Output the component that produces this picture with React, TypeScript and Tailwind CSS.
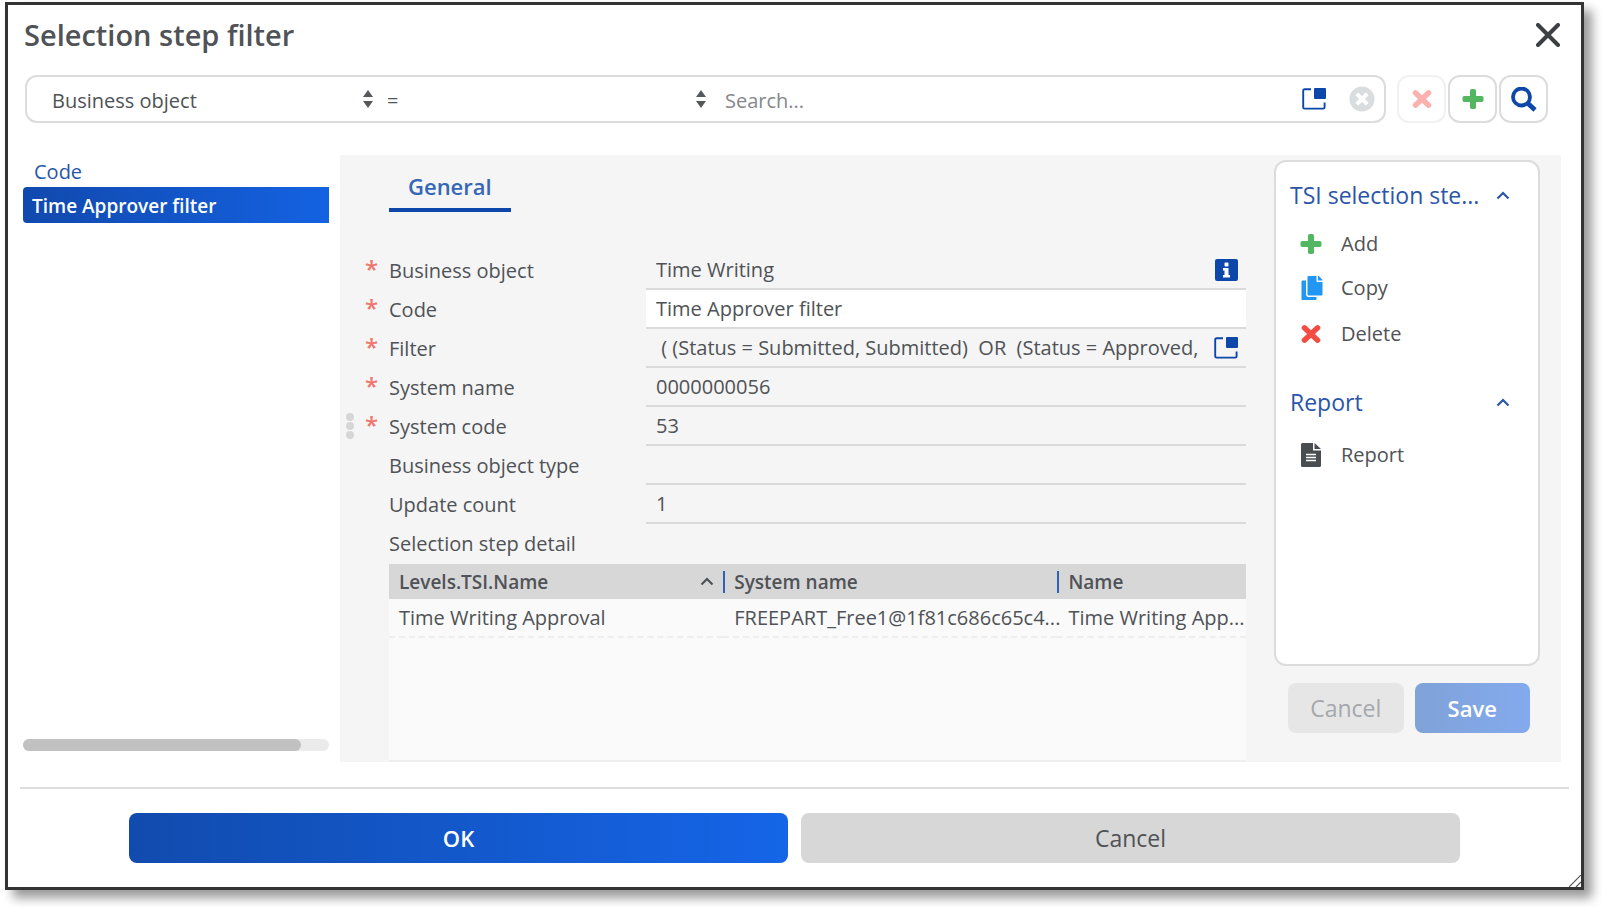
import { useState } from 'react'
import { FaCopy, FaTimesCircle } from 'react-icons/fa'

const fields = [
  { id: 'business-object', label: 'Business object', value: 'Time Writing', required: true, icon: 'info' },
  { id: 'code', label: 'Code', value: 'Time Approver filter', required: true, editable: true },
  {
    id: 'filter',
    label: 'Filter',
    value: ' ( (Status = Submitted, Submitted)  OR  (Status = Approved,',
    required: true,
    icon: 'open',
  },
  { id: 'system-name', label: 'System name', value: '0000000056', required: true },
  { id: 'system-code', label: 'System code', value: '53', required: true },
  { id: 'object-type', label: 'Business object type', value: '' },
  { id: 'update-count', label: 'Update count', value: '1' },
]

const OpenIcon = () => (
  <svg width="24" height="22" viewBox="0 0 24 22" fill="none">
    <path d="M9 1.2H2.6Q1.2 1.2 1.2 2.6V19.2Q1.2 20.6 2.6 20.6H21.2Q22.6 20.6 22.6 19.2V14.5" stroke="#0d47a9" strokeWidth="1.9" />
    <rect x="12" y="0" width="12" height="11" rx="1" fill="#0d47a9" />
  </svg>
)

const InfoIcon = () => (
  <svg width="23" height="22" viewBox="0 0 23 22">
    <rect width="23" height="22" rx="2" fill="#0d47a9" />
    <rect x="9.5" y="3.5" width="4" height="4" rx="1" fill="#fff" />
    <path d="M8 9h5.5v7H15v2.5H8V16h1.5v-4.500H8z" fill="#fff" />
  </svg>
)

const PlusIcon = () => (
  <svg width="22" height="22" viewBox="0 0 22 22">
    <rect x="0.5" y="8" width="21" height="6" rx="1.800" fill="#53b761" />
    <rect x="8" y="1" width="6" height="20" rx="1.800" fill="#53b761" />
  </svg>
)

const CrossIcon = ({ color }: { color: string }) => (
  <svg width="22" height="22" viewBox="0 0 22 22" stroke={color} strokeWidth="5.400" strokeLinecap="round">
    <path d="M4.400 4.800l13.200 12.400M17.600 4.800L4.400 17.200" />
  </svg>
)

const SearchIcon = () => (
  <svg width="26" height="25" viewBox="0 0 26 25" fill="none" stroke="#0d47a9">
    <circle cx="10.500" cy="10" r="8.500" strokeWidth="3.800" />
    <path d="M16.500 16l7.500 7" strokeWidth="4.800" />
  </svg>
)

const ReportIcon = () => (
  <svg width="20" height="24" viewBox="0 0 20 24">
    <path d="M1.500 0H12v7.500h8V22.500Q20 24 18.500 24h-17Q0 24 0 22.500v-21Q0 0 1.500 0z" fill="#4a4d50" />
    <path d="M13.500 0l6.500 6h-6.500z" fill="#4a4d50" />
    <path d="M5 11.500h10M5 14.500h10M5 17.500h10" stroke="#fff" strokeWidth="1.500" />
  </svg>
)

const SortArrows = () => (
  <svg width="12" height="18" viewBox="0 0 12 18" className="pointer-events-none shrink-0">
    <path d="M6 0l5 7H1zM6 18l5-7H1z" fill="#55585c" />
  </svg>
)

const CaretUp = () => (
  <svg width="14" height="9" viewBox="0 0 14 9" fill="none">
    <path d="M1.500 7.500L7 2l5.500 5.500" stroke="currentColor" strokeWidth="2.200" />
  </svg>
)

function SearchBar() {
  const [query, setQuery] = useState('')

  return (
    <div className="flex pl-[17px] pr-[33px]">
      <div className="flex h-12 min-w-0 flex-1 items-center rounded-xl border-2 border-[#dcdcdc] pl-[25px] pr-[9px]">
        <div className="flex w-[322px] items-center">
          <select aria-label="Search field" className="min-w-0 flex-1 appearance-none pt-[3px] outline-none">
            <option>Business object</option>
          </select>
          <SortArrows />
        </div>
        <div className="ml-[13px] flex w-[320px] items-center">
          <select aria-label="Operator" className="min-w-0 flex-1 appearance-none pt-[3px] outline-none">
            <option>=</option>
          </select>
          <SortArrows />
        </div>
        <input
          aria-label="Search"
          placeholder="Search..."
          value={query}
          onChange={(e) => setQuery(e.target.value)}
          className="ml-[18px] min-w-0 flex-1 pt-[3px] outline-none placeholder:text-[#85888c]"
        />
        <button aria-label="Open lookup" className="mr-[23px]">
          <OpenIcon />
        </button>
        <button aria-label="Clear" onClick={() => setQuery('')} className="text-[#d9dde0]">
          <FaTimesCircle size={26} />
        </button>
      </div>
      <div className="ml-[11px] flex gap-[2px]">
        <button aria-label="Remove condition" disabled className="flex h-12 w-[49px] items-center justify-center rounded-xl border-2 border-[#f1f1f1]">
          <CrossIcon color="#fbb1ad" />
        </button>
        <button aria-label="Add condition" className="flex h-12 w-[49px] items-center justify-center rounded-xl border-2 border-[#dcdcdc]">
          <PlusIcon />
        </button>
        <button aria-label="Run search" className="flex h-12 w-[49px] items-center justify-center rounded-xl border-2 border-[#dcdcdc]">
          <SearchIcon />
        </button>
      </div>
    </div>
  )
}

function ResultList() {
  return (
    <div className="flex w-[306px] shrink-0 flex-col pb-[11px]">
      <div className="flex h-8 items-center pl-[11px] pt-[2px] text-[#2b55a8]">Code</div>
      <button className="h-9 rounded-l-sm bg-linear-to-r from-[#1149ae] to-[#1462e2] pl-[9px] pt-px text-left text-[19px] font-semibold text-white">
        Time Approver filter
      </button>
      <div className="mt-auto h-3 rounded-full bg-[#ebebeb]">
        <div className="h-3 w-[91%] rounded-full bg-[#c1c1c1]" />
      </div>
    </div>
  )
}

function DetailTable() {
  return (
    <div className="flex-1 border-b-2 border-[#eeeeee] bg-[#fafafa]">
      <table className="w-full table-fixed text-left">
        <thead className="bg-[#d7d7d7] text-[19px]">
          <tr className="h-[35px]">
            <th className="w-[39%] p-0 font-semibold">
              <div className="flex items-center justify-between pl-[10px] pr-[9px]">
                Levels.TSI.Name
                <CaretUp />
              </div>
            </th>
            <th className="w-[39%] p-0 font-semibold">
              <div className="flex items-center gap-[9px]">
                <span className="h-[22px] w-[2px] bg-[#2f62b5]" />
                System name
              </div>
            </th>
            <th className="p-0 font-semibold">
              <div className="flex items-center gap-[9px]">
                <span className="h-[22px] w-[2px] bg-[#2f62b5]" />
                Name
              </div>
            </th>
          </tr>
        </thead>
        <tbody>
          <tr className="h-[38px] whitespace-nowrap border-b-2 border-dashed border-[#eeeeee]">
            <td className="pl-[10px]">Time Writing Approval</td>
            <td className="pl-[11px]">FREEPART_Free1@1f81c686c65c4...</td>
            <td className="pl-[11px]">Time Writing App...</td>
          </tr>
        </tbody>
      </table>
    </div>
  )
}

function DetailForm() {
  return (
    <div className="flex min-w-0 flex-1">
      <div className="flex w-[49px] shrink-0 flex-col pl-[6px] pt-[258px]">
        <div className="flex flex-col gap-px">
          <span className="h-2 w-2 rounded-full bg-[#d6d6d6]" />
          <span className="h-2 w-2 rounded-full bg-[#d6d6d6]" />
          <span className="h-2 w-2 rounded-full bg-[#d6d6d6]" />
        </div>
      </div>
      <div className="flex min-w-0 flex-1 flex-col">
        <div role="tablist" className="mb-[39px] flex">
          <button role="tab" aria-selected className="h-[57px] border-b-4 border-[#0d47a9] px-[19px] pt-2 text-[22px] font-semibold text-[#3566b8]">
            General
          </button>
        </div>
        {fields.map((f) => (
          <div key={f.id} className="flex h-[39px] items-center">
            <label htmlFor={f.id} className="relative w-[257px] shrink-0">
              {f.required && <span className="absolute -left-6 -top-[2px] text-[24px] font-semibold text-[#f0756f]">*</span>}
              {f.label}
            </label>
            <div className={`flex h-[39px] min-w-0 flex-1 items-center border-b-2 border-[#dadada] pl-[10px] pr-2 ${f.editable ? 'bg-white' : ''}`}>
              <input id={f.id} defaultValue={f.value} readOnly={!f.editable} className="min-w-0 flex-1 whitespace-pre outline-none" />
              {f.icon === 'info' && <button aria-label="Show business object"><InfoIcon /></button>}
              {f.icon === 'open' && <button aria-label="Edit filter"><OpenIcon /></button>}
            </div>
          </div>
        ))}
        <div className="flex h-10 items-center">Selection step detail</div>
        <DetailTable />
      </div>
    </div>
  )
}

function ActionPanel() {
  return (
    <div className="ml-7 mr-[21px] flex w-[266px] shrink-0 flex-col pb-[29px] pt-[5px]">
      <div className="flex-1 rounded-xl border-2 border-[#dcdcdc] bg-white pl-[14px]">
        <button className="flex h-[66px] w-[220px] items-center justify-between text-[23px] text-[#2b55a8]">
          <span>TSI selection ste...</span>
          <CaretUp />
        </button>
        <button className="flex h-8 items-center pl-[10px]">
          <span className="flex w-[41px]"><PlusIcon /></span>
          <span>Add</span>
        </button>
        <button className="mt-3 flex h-8 items-center pl-[10px]">
          <span className="flex w-[41px]"><FaCopy size={24} color="#2196f3" /></span>
          <span>Copy</span>
        </button>
        <button className="mt-[14px] flex h-8 items-center pl-[10px]">
          <span className="flex w-[41px]"><CrossIcon color="#f44c43" /></span>
          <span>Delete</span>
        </button>
        <button className="mt-[34px] flex h-9 w-[220px] items-center justify-between text-[23px] text-[#2b55a8]">
          <span>Report</span>
          <CaretUp />
        </button>
        <button className="mt-[19px] flex h-8 items-center pl-[11px]">
          <span className="flex w-10"><ReportIcon /></span>
          <span>Report</span>
        </button>
      </div>
      <div className="mt-[17px] flex gap-[11px] pl-[14px] pr-[10px]">
        <button disabled className="h-[50px] flex-1 rounded-lg bg-[#e6e6e6] text-[23px] text-[#a5a8ab]">Cancel</button>
        <button disabled className="h-[50px] flex-1 rounded-lg bg-linear-to-r from-[#80a2d8] to-[#83aaee] text-[22px] font-semibold text-white">Save</button>
      </div>
    </div>
  )
}

export default function App() {
  return (
    <div className="bg-white pb-[17px] pl-[5px] pr-[18px] pt-[2px] font-['Open_Sans','Noto_Sans',sans-serif] text-[20px] leading-7 text-[#4f5256]">
      <div role="dialog" aria-labelledby="dialog-title" className="relative border-3 border-[#333333] bg-white shadow-[8px_8px_10px_rgba(0,0,0,0.4)]">
        <div className="flex h-[70px] items-center justify-between pb-[10px] pl-4 pr-[21px]">
          <h1 id="dialog-title" className="text-[29px] font-semibold">Selection step filter</h1>
          <button aria-label="Close">
            <svg width="24" height="24" viewBox="0 0 24 24" fill="none">
              <path d="M2 2l20 20M22 2L2 22" stroke="#3c3f43" strokeWidth="4" strokeLinecap="round" />
            </svg>
          </button>
        </div>
        <SearchBar />
        <div className="mt-8 flex min-h-[607px] gap-[11px] pl-[15px] pr-5">
          <ResultList />
          <div className="flex min-w-0 flex-1 bg-[#f5f5f5]">
            <DetailForm />
            <ActionPanel />
          </div>
        </div>
        <div className="mx-3 mt-[25px] border-t-2 border-[#dedede]" />
        <div className="flex gap-[13px] px-[121px] py-6">
          <button className="h-[50px] flex-1 rounded-lg bg-linear-to-r from-[#114bae] to-[#1565e8] text-[22px] font-semibold text-white">OK</button>
          <button className="h-[50px] flex-1 rounded-lg bg-[#d7d7d7] text-[23px]">Cancel</button>
        </div>
        <svg width="12" height="12" viewBox="0 0 12 12" className="absolute bottom-0 right-0">
          <path d="M0 12L12 0M7 12l5-5" stroke="#555" strokeWidth="1.200" />
        </svg>
      </div>
    </div>
  )
}
